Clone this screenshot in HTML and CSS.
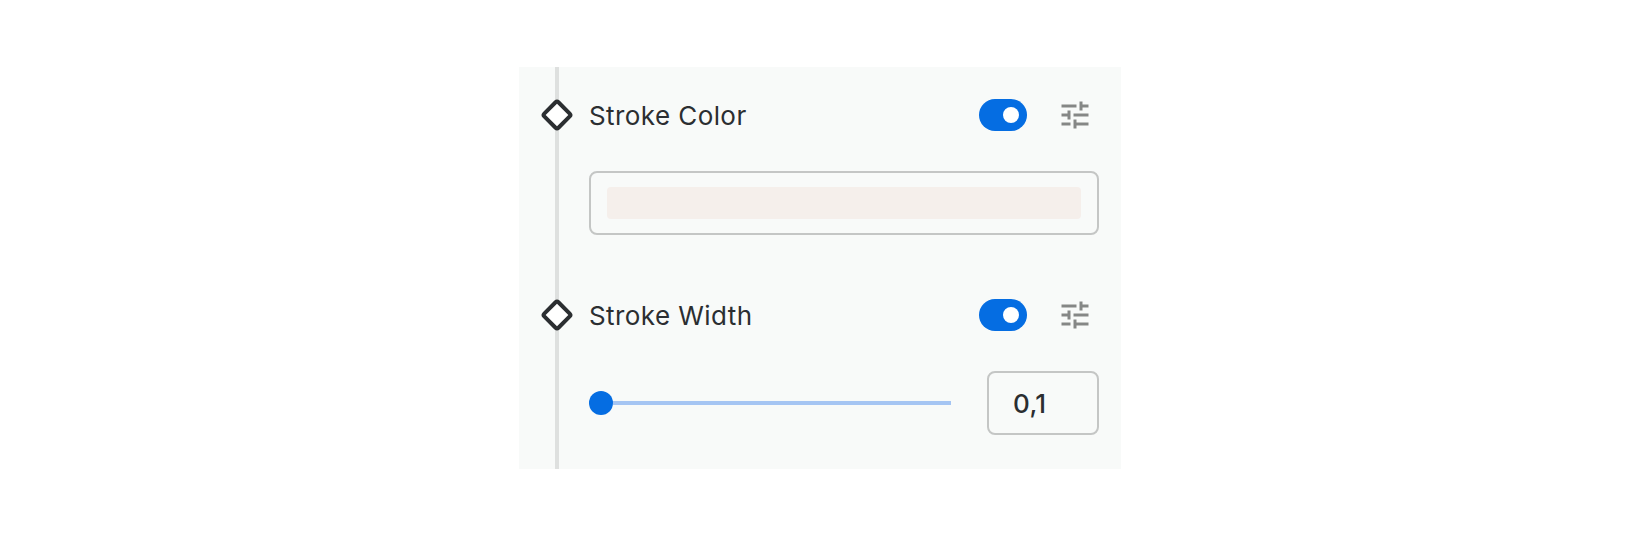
FILE: index.html
```html
<!DOCTYPE html>
<html lang="en">
<head>
<meta charset="utf-8">
<title>Stroke settings</title>
<link rel="stylesheet" href="styles.css">
</head>
<body>
<main class="panel">
  <section class="property">
    <header class="row">
      <svg class="diamond" viewBox="0 0 32 32"><rect x="6" y="6" width="20" height="20" rx="2" transform="rotate(45 16 16)"/></svg>
      <span class="label">Stroke Color</span>
      <span class="toggle"><span class="knob"></span></span>
      <svg class="tune" viewBox="0 0 24 24"><path d="M3 17v2h6v-2H3zM3 5v2h10V5H3zm10 16v-2h8v-2h-8v-2h-2v6h2zM7 9v2H3v2h4v2h2V9H7zm14 4v-2H11v2h10zm-6-4h2V7h4V5h-4V3h-2v6z"/></svg>
    </header>
    <div class="control field">
      <div class="swatch"></div>
    </div>
  </section>
  <section class="property">
    <header class="row">
      <svg class="diamond" viewBox="0 0 32 32"><rect x="6" y="6" width="20" height="20" rx="2" transform="rotate(45 16 16)"/></svg>
      <span class="label">Stroke Width</span>
      <span class="toggle"><span class="knob"></span></span>
      <svg class="tune" viewBox="0 0 24 24"><path d="M3 17v2h6v-2H3zM3 5v2h10V5H3zm10 16v-2h8v-2h-8v-2h-2v6h2zM7 9v2H3v2h4v2h2V9H7zm14 4v-2H11v2h10zm-6-4h2V7h4V5h-4V3h-2v6z"/></svg>
    </header>
    <div class="control slider-row">
      <div class="slider"><span class="thumb"></span><span class="track"></span></div>
      <div class="field number">0,1</div>
    </div>
  </section>
</main>
</body>
</html>
```
FILE: styles.css
```css
* { box-sizing: border-box; }

body {
  margin: 0;
  height: 535px;
  padding-top: 67px;
  background: #fff;
  color: #2b2e31;
  font-family: Inter, "Liberation Sans", sans-serif;
  font-size: 26px;
}

/* The timeline rail is painted as a vertical stripe of the panel. */
.panel {
  width: 602px;
  height: 402px;
  margin: 0 auto;
  padding: 28px 22px 0;
  background: linear-gradient(#dee0df, #dee0df) 36px 0 / 4px 100% no-repeat #f8faf9;
}

.property { height: 200px; }

.row {
  display: flex;
  align-items: center;
  height: 40px;
}

.diamond {
  width: 32px;
  height: 32px;
  margin-right: 16px;
  fill: #fff;
  stroke: #2b2e31;
  stroke-width: 4;
}

.label {
  flex: 1;
  padding-top: 2px;
  line-height: 38px;
  letter-spacing: 0.42px;
  white-space: nowrap;
}

.toggle {
  display: flex;
  justify-content: flex-end;
  width: 48px;
  height: 32px;
  padding: 8px;
  border-radius: 16px;
  background: #056de2;
}

.knob {
  width: 16px;
  height: 16px;
  border-radius: 50%;
  background: #fff;
}

.tune {
  width: 36px;
  height: 36px;
  margin: 0 6px 0 30px;
  fill: #858786;
}

.control {
  margin: 36px 0 0 48px;
}

.field {
  height: 64px;
  border: 2px solid #c4c6c5;
  border-radius: 8px;
}

.field .swatch {
  height: 32px;
  margin: 14px 16px;
  border-radius: 4px;
  background: #f5efeb;
}

.slider-row {
  display: flex;
  align-items: center;
  gap: 36px;
}

.slider {
  display: flex;
  flex: 1;
  align-items: center;
}

.thumb {
  width: 24px;
  height: 24px;
  border-radius: 50%;
  background: #056de2;
}

.track {
  flex: 1;
  height: 4px;
  background: #a5c5f3;
}

.number {
  width: 112px;
  padding-left: 24px;
  font-weight: 500;
  letter-spacing: 0.3px;
  line-height: 61px;
}
```
